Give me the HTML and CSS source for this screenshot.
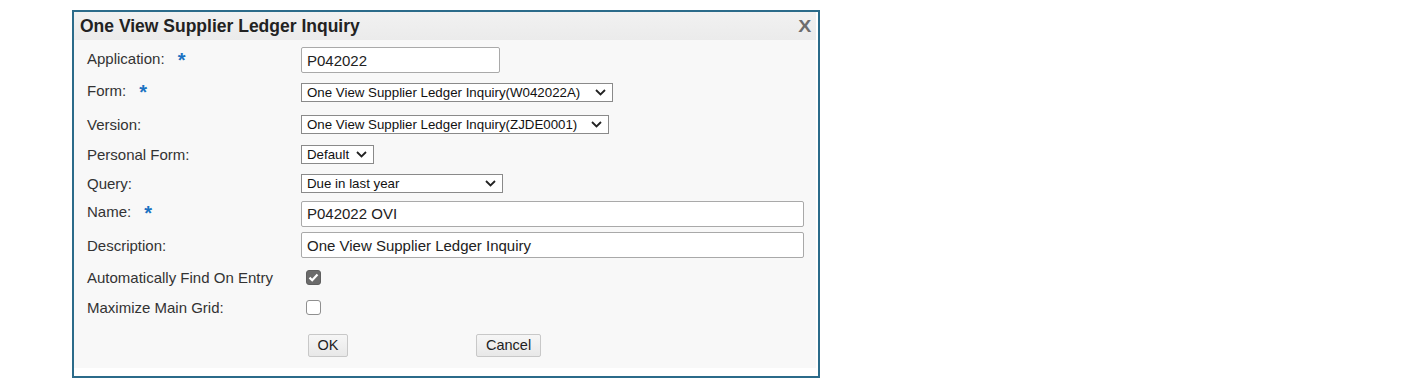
FILE: index.html
```html
<!DOCTYPE html>
<html>
  <head>
    <meta name="viewport" content="width=device-width, initial-scale=1" />
    <title>One View Supplier Ledger Inquiry</title>
    <link rel="stylesheet" href="styles.css">
  </head>
  <body>
    <div class="dialog">
      <div class="titlebar">
        <span class="title">One View Supplier Ledger Inquiry</span>
        <span class="close">X</span>
      </div>
      <form class="body">
        <div class="row r-app">
          <label class="lbl">Application: <span class="req">*</span></label>
          <input class="text w-app" type="text" value="P042022">
        </div>
        <div class="row r-sel">
          <label class="lbl">Form: <span class="req">*</span></label>
          <span class="selwrap">
            <select class="sel w-form"><option>One View Supplier Ledger Inquiry(W042022A)</option></select>
            <svg class="chev" width="11" height="7" viewBox="0 0 11 7"><path d="M1 1 L5.5 5.5 L10 1" fill="none" stroke="#222" stroke-width="1.8"/></svg>
          </span>
        </div>
        <div class="row r-sel">
          <label class="lbl">Version:</label>
          <span class="selwrap">
            <select class="sel w-version"><option>One View Supplier Ledger Inquiry(ZJDE0001)</option></select>
            <svg class="chev" width="11" height="7" viewBox="0 0 11 7"><path d="M1 1 L5.5 5.5 L10 1" fill="none" stroke="#222" stroke-width="1.8"/></svg>
          </span>
        </div>
        <div class="row r-personal">
          <label class="lbl">Personal Form:</label>
          <span class="selwrap">
            <select class="sel w-personal"><option>Default</option></select>
            <svg class="chev" width="11" height="7" viewBox="0 0 11 7"><path d="M1 1 L5.5 5.5 L10 1" fill="none" stroke="#222" stroke-width="1.8"/></svg>
          </span>
        </div>
        <div class="row r-query">
          <label class="lbl">Query:</label>
          <span class="selwrap">
            <select class="sel w-query"><option>Due in last year</option></select>
            <svg class="chev" width="11" height="7" viewBox="0 0 11 7"><path d="M1 1 L5.5 5.5 L10 1" fill="none" stroke="#222" stroke-width="1.8"/></svg>
          </span>
        </div>
        <div class="row r-name">
          <label class="lbl">Name: <span class="req">*</span></label>
          <input class="text w-full" type="text" value="P042022 OVI">
        </div>
        <div class="row r-desc">
          <label class="lbl">Description:</label>
          <input class="text w-full" type="text" value="One View Supplier Ledger Inquiry">
        </div>
        <div class="row r-check">
          <label class="lbl">Automatically Find On Entry</label>
          <span class="box checked">
            <svg width="11" height="9" viewBox="0 0 11 9"><path d="M1.5 4.6 L4.2 7.2 L9.5 1.5" fill="none" stroke="#fff" stroke-width="2.2"/></svg>
          </span>
        </div>
        <div class="row r-check">
          <label class="lbl">Maximize Main Grid:</label>
          <span class="box"></span>
        </div>
        <div class="row r-buttons">
          <span class="lbl"></span>
          <div class="buttons">
            <button type="button" class="btn ok">OK</button>
            <button type="button" class="btn">Cancel</button>
          </div>
        </div>
      </form>
    </div>
  </body>
</html>
```

FILE: styles.css
```css
body {
  margin: 0;
  padding: 10px 0 0 72px;
  background: #fff;
  font-family: "Liberation Sans", Arial, sans-serif;
  color: #333;
}

/* Dialog frame */
.dialog {
  width: 742px;
  border: 2px solid #2b6b8a;
  background: #fff;
  padding: 0 2px 8px 0;
}
.titlebar {
  height: 28px;
  display: flex;
  align-items: center;
  justify-content: space-between;
  padding: 0 6px 0 6px;
  background: linear-gradient(#f1f1f1, #ebebeb);
}
.title {
  font-size: 17.5px;
  font-weight: bold;
  color: #222;
}
.close {
  font-size: 17px;
  font-weight: bold;
  color: #6d6d6d;
  padding-top: 2px;
  transform: scaleX(1.15);
}

/* Form body */
.body {
  margin: 0;
  background: #f8f8f8;
  padding: 4px 0 0 13px;
}
.row {
  display: flex;
  align-items: center;
}
.r-app { height: 32px; }
.r-sel { height: 32px; }
.r-personal { height: 28px; }
.r-query { height: 31px; }
.r-name { height: 29px; }
.r-desc { height: 34px; }
.r-check { height: 30px; }
.r-buttons { height: 46px; }

.lbl {
  width: 214px;
  flex: none;
  font-size: 15px;
  color: #333;
}
.req {
  color: #1b72c2;
  font-weight: bold;
  font-size: 20px;
  margin-left: 9px;
  vertical-align: -3px;
}

.text {
  box-sizing: border-box;
  height: 26px;
  border: 1px solid #a9a9a9;
  border-radius: 2px;
  background: #fff;
  padding: 0 5px;
  font: 15px "Liberation Sans", Arial, sans-serif;
  color: #222;
}
.w-app { width: 199px; }
.w-full { width: 503px; }

/* Selects with a drawn chevron over the right end */
.selwrap {
  position: relative;
  display: inline-flex;
}
.sel {
  appearance: none;
  box-sizing: border-box;
  height: 19px;
  border: 1px solid #8a8a8a;
  border-radius: 0;
  background: #fff;
  font: 13.3px "Liberation Sans", Arial, sans-serif;
  color: #111;
  padding: 0 0 0 5px;
}
.chev {
  position: absolute;
  right: 7px;
  top: 6px;
  pointer-events: none;
}
.w-form { width: 312px; }
.w-version { width: 308px; }
.w-personal { width: 73px; }
.w-query { width: 202px; }

/* Checkboxes */
.box {
  box-sizing: border-box;
  width: 15px;
  height: 15px;
  margin-left: 5px;
  border: 1px solid #8f8f8f;
  border-radius: 3px;
  background: #fff;
  display: flex;
  align-items: center;
  justify-content: center;
}
.box.checked {
  background: #6b6b6b;
  border-color: #5f5f5f;
}

/* Buttons */
.buttons {
  display: flex;
  gap: 128px;
  padding-left: 7px;
}
.btn {
  height: 23px;
  padding: 0 9px;
  border: 1px solid #c8c8c8;
  border-radius: 2px;
  background: linear-gradient(#f6f6f6, #e8e8e8);
  font: 14.5px "Liberation Sans", Arial, sans-serif;
  color: #222;
}
.ok { width: 40px; padding: 0; }
```
